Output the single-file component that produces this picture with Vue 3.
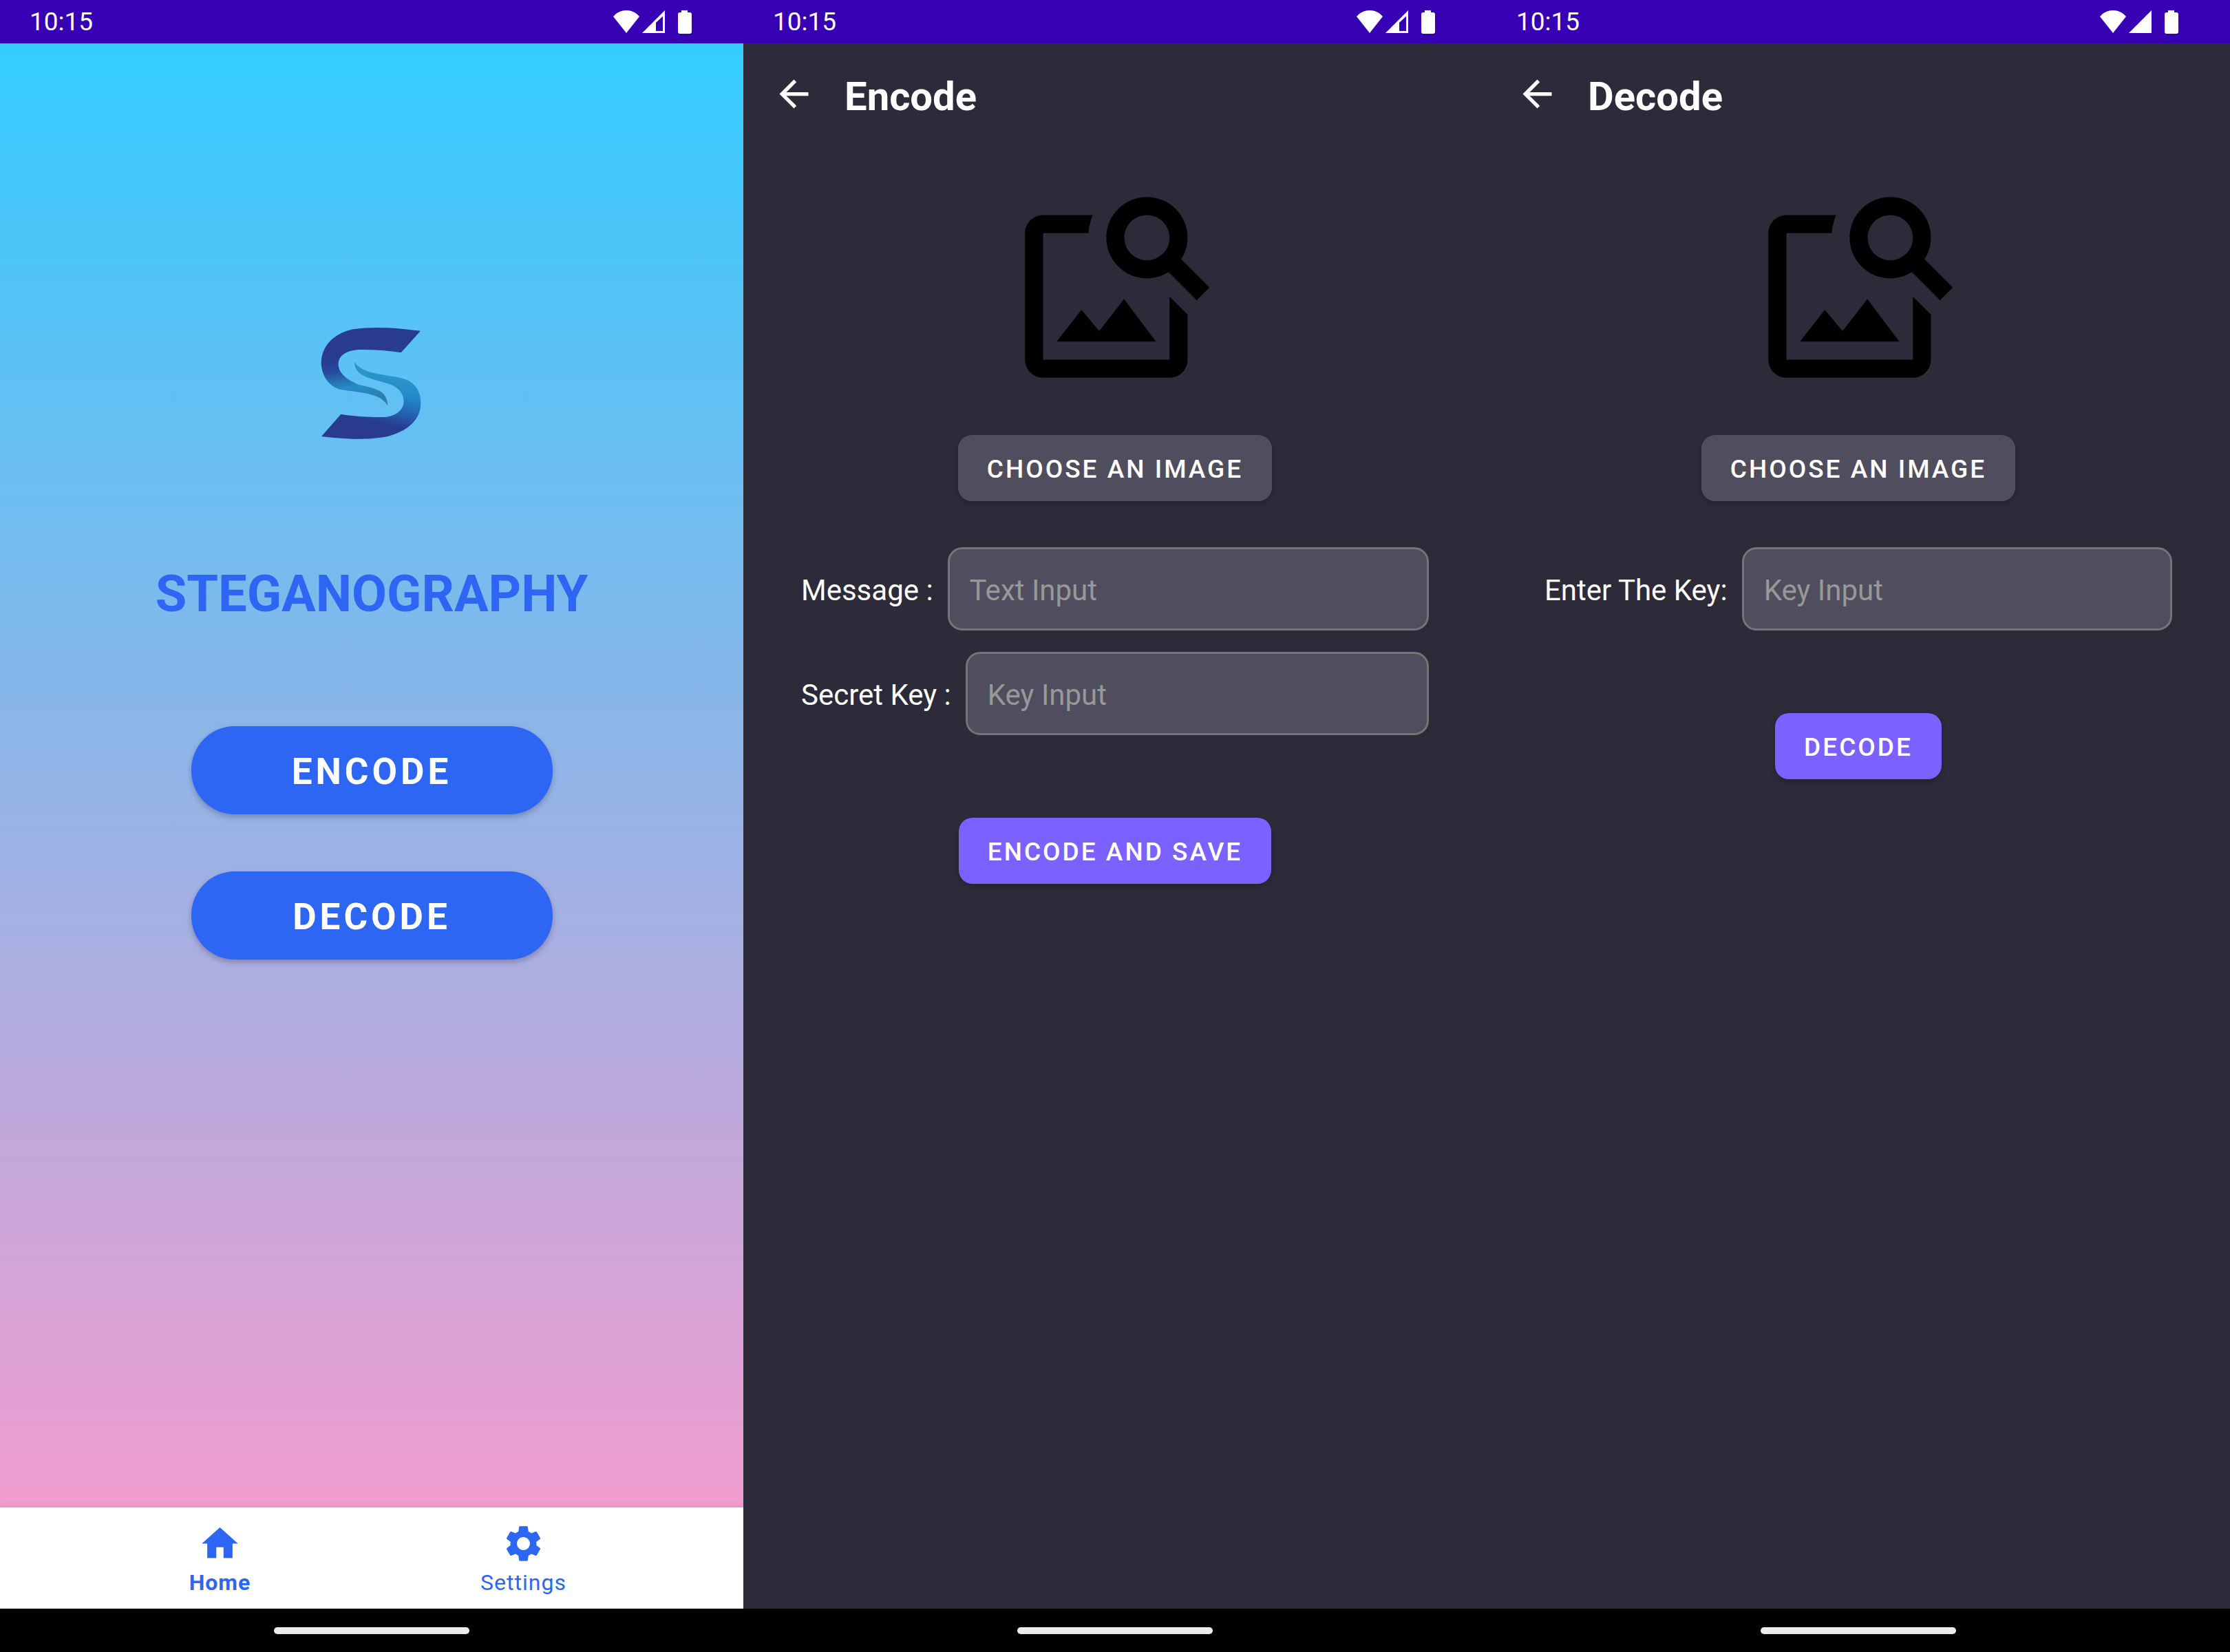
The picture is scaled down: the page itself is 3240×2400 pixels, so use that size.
<script setup>
import { ref } from 'vue'

const message = ref('')
const secretKey = ref('')
const decodeKey = ref('')

const screens = [
  { id: 'home', fullSignal: false },
  { id: 'encode', title: 'Encode', fullSignal: false },
  { id: 'decode', title: 'Decode', fullSignal: true },
]
</script>

<template>
  <div class="screens">
    <section v-for="screen in screens" :key="screen.id" class="screen" :class="screen.id">
      <div class="status-bar">
        <span class="clock">10:15</span>
        <svg class="status-icons" viewBox="0 0 116 36" aria-hidden="true">
          <path d="M20 34 1 10C6 4 13 1 20 1s14 3 19 9z" />
          <path v-if="screen.fullSignal" d="M76 1v33H43z" />
          <path v-else fill-rule="evenodd" d="M76 1v33H43zM73 9.500 63 19v12h10z" />
          <path d="M100 1h9v3h3q3 0 3 3v25q0 3-3 3h-14q-3 0-3-3V7q0-3 3-3h2z" />
        </svg>
      </div>

      <template v-if="screen.id === 'home'">
        <main class="home-body">
          <svg class="logo" viewBox="0 0 720 720" aria-hidden="true">
            <defs>
              <linearGradient id="logo-upper" gradientUnits="userSpaceOnUse" x1="290" y1="200" x2="330" y2="420">
                <stop offset="0.1" stop-color="#283b8f" />
                <stop offset="0.35" stop-color="#27479b" />
                <stop offset="0.72" stop-color="#258dc6" />
                <stop offset="1" stop-color="#2b7fae" />
              </linearGradient>
              <linearGradient id="logo-lower" gradientUnits="userSpaceOnUse" x1="470" y1="320" x2="420" y2="530">
                <stop offset="0" stop-color="#2b97c8" />
                <stop offset="0.35" stop-color="#2389c8" />
                <stop offset="0.7" stop-color="#2560ae" />
                <stop offset="1" stop-color="#283b8f" />
              </linearGradient>
            </defs>
            <path fill="url(#logo-upper)" d="M573 122 488 217C430 209 370 202 305 204C245 207 212 232 215 272C218 305 250 336 306 357C350 368 392 375 413 398C425 412 430 430 429 448C415 424 395 411 365 402C320 388 270 386 220 377C172 362 140 315 140 258C142 185 200 130 280 115C370 101 470 109 573 122Z" />
            <path fill="url(#logo-lower)" d="M285 257C300 283 335 298 375 307C420 318 470 320 510 334C552 352 576 390 574 440C572 520 500 568 410 586C325 599 235 593 141 582L226 485C280 494 330 499 420 498C465 492 498 470 500 430C500 390 470 362 425 350C385 338 345 330 315 312C295 300 284 280 285 257Z" />
          </svg>
          <h1 class="app-name">STEGANOGRAPHY</h1>
          <div class="home-actions">
            <button type="button" class="pill">ENCODE</button>
            <button type="button" class="pill">DECODE</button>
          </div>
        </main>
        <nav class="bottom-nav">
          <a href="#home" class="nav-item active">
            <svg viewBox="0 0 24 24" aria-hidden="true"><path d="M10 20v-6h4v6h5v-8h3L12 3 2 12h3v8z" /></svg>
            <span>Home</span>
          </a>
          <a href="#settings" class="nav-item">
            <svg viewBox="0 0 24 24" aria-hidden="true"><path d="M19.140 12.940c.04-.3.06-.61.06-.94 0-.32-.02-.64-.07-.94l2.030-1.580c.18-.14.23-.41.12-.61l-1.920-3.320c-.12-.22-.37-.29-.59-.22l-2.390.96c-.5-.38-1.030-.7-1.620-.94l-.36-2.540c-.04-.24-.24-.41-.48-.41h-3.840c-.24 0-.43.17-.47.41l-.36 2.540c-.59.24-1.130.57-1.620.94l-2.390-.96c-.22-.08-.47 0-.59.22L2.740 8.870c-.12.21-.08.47.12.61l2.030 1.580c-.05.3-.09.63-.09.94s.02.64.07.94l-2.030 1.580c-.18.14-.23.41-.12.61l1.920 3.320c.12.22.37.29.59.22l2.390-.96c.5.38 1.030.7 1.620.94l.36 2.540c.05.24.24.41.48.41h3.840c.24 0 .44-.17.47-.41l.36-2.540c.59-.24 1.130-.56 1.620-.94l2.390.96c.22.08.47 0 .59-.22l1.920-3.320c.12-.22.07-.47-.12-.61l-2.010-1.580zM12 15.600c-1.980 0-3.600-1.620-3.600-3.600s1.620-3.600 3.600-3.600 3.600 1.620 3.600 3.600-1.620 3.600-3.600 3.600z" /></svg>
            <span>Settings</span>
          </a>
        </nav>
      </template>

      <template v-else>
        <header class="toolbar">
          <button type="button" class="back" aria-label="Back">
            <svg viewBox="0 0 24 24" aria-hidden="true"><path d="M20 11H7.830l5.590-5.590L12 4l-8 8 8 8 1.410-1.410L7.830 13H20z" /></svg>
          </button>
          <h2 class="toolbar-title">{{ screen.title }}</h2>
        </header>
        <main class="form-body">
          <svg class="image-search" viewBox="0 0 24 24" aria-hidden="true">
            <path d="M18 13v7H4V6h5.020c.05-.71.22-1.380.48-2H4c-1.100 0-2 .9-2 2v14c0 1.100.9 2 2 2h14c1.100 0 2-.9 2-2v-5l-2-2zm-1.500 5h-11l2.750-3.530 1.960 2.360 2.750-3.540zm2.800-9.110c.44-.7.7-1.510.7-2.390C20 4.010 17.990 2 15.500 2S11 4.010 11 6.500s2.010 4.500 4.490 4.500c.88 0 1.700-.26 2.390-.7L21 13.420 22.420 12 19.300 8.890zM15.500 9C14.120 9 13 7.880 13 6.500S14.120 4 15.500 4 18 5.120 18 6.500 16.880 9 15.500 9z" />
          </svg>
          <button type="button" class="btn">CHOOSE AN IMAGE</button>
          <div v-if="screen.id === 'encode'" class="fields">
            <div class="field">
              <label for="message">Message :</label>
              <input id="message" v-model="message" type="text" placeholder="Text Input" />
            </div>
            <div class="field">
              <label for="secret-key">Secret Key :</label>
              <input id="secret-key" v-model="secretKey" type="text" placeholder="Key Input" />
            </div>
          </div>
          <div v-else class="fields">
            <div class="field">
              <label for="decode-key">Enter The Key:</label>
              <input id="decode-key" v-model="decodeKey" type="text" placeholder="Key Input" />
            </div>
          </div>
          <button type="button" class="btn primary">{{ screen.id === 'encode' ? 'ENCODE AND SAVE' : 'DECODE' }}</button>
        </main>
      </template>

      <div class="gesture-bar"><div class="handle"></div></div>
    </section>
  </div>
</template>

<style>
body {
  background: #2d2b3a;
}
</style>

<style scoped>
.screens {
  display: grid;
  grid-template-columns: repeat(3, 1fr);
  min-height: 100vh;
  font-family: Roboto, sans-serif;
}

.screen {
  display: flex;
  flex-direction: column;
  background: #2d2b3a;
  color: #fff;
}

button {
  border: 0;
  font-family: inherit;
  color: #fff;
  cursor: pointer;
}

svg {
  display: block;
  fill: currentColor;
}

.status-bar {
  display: flex;
  align-items: center;
  justify-content: space-between;
  height: 63px;
  padding: 0 74px 0 43px;
  background: #3700b3;
}

.clock {
  font-size: 37px;
  line-height: 44px;
}

.status-icons {
  width: 116px;
  height: 36px;
}

.home {
  background: linear-gradient(#33ccff 63px, #ff99cc calc(100% - 63px));
}

.home-body {
  flex: 1;
  display: flex;
  flex-direction: column;
  align-items: center;
  padding-top: 377px;
}

.logo {
  width: 240px;
  height: 240px;
}

.app-name {
  margin: 139px 0 0;
  font-size: 74px;
  line-height: 88px;
  font-weight: 700;
  color: #2c66f3;
}

.home-actions {
  display: flex;
  flex-direction: column;
  gap: 83px;
  margin-top: 148px;
}

.pill {
  width: 525px;
  height: 128px;
  padding-top: 4px;
  border-radius: 63px;
  background: #2c66f3;
  font-size: 53px;
  font-weight: 700;
  letter-spacing: 5px;
  box-shadow: 0 4px 8px rgba(0, 0, 0, 0.24);
}

.bottom-nav {
  display: flex;
  justify-content: center;
  height: 147px;
  background: #fff;
  box-shadow: 0 0 12px rgba(0, 0, 0, 0.12);
}

.nav-item {
  display: flex;
  flex-direction: column;
  align-items: center;
  width: 441px;
  padding-top: 21px;
  box-sizing: border-box;
  color: #2c66f3;
  font-size: 32px;
  line-height: 38px;
  letter-spacing: 1px;
  text-decoration: none;
}

.nav-item svg {
  width: 63px;
  height: 63px;
  margin-bottom: 6px;
}

.nav-item.active {
  font-weight: 700;
}

.toolbar {
  display: flex;
  align-items: center;
  gap: 42px;
  height: 147px;
  padding: 0 42px;
}

.back {
  padding: 0;
  background: none;
}

.back svg {
  width: 63px;
  height: 63px;
}

.toolbar-title {
  margin: 0;
  padding-top: 6px;
  font-size: 58px;
  line-height: 68px;
  font-weight: 700;
}

.form-body {
  flex: 1;
  display: flex;
  flex-direction: column;
  align-items: center;
  padding: 50px 84px 0;
}

.image-search {
  width: 315px;
  height: 315px;
  margin-bottom: 57px;
  color: #000;
}

.btn {
  height: 96px;
  padding: 2px 42px 0;
  border-radius: 20px;
  background: #504e5e;
  font-size: 37px;
  font-weight: 500;
  letter-spacing: 3px;
  box-shadow: 0 4px 8px rgba(0, 0, 0, 0.2);
}

.btn.primary {
  background: #7b61ff;
}

.fields {
  display: flex;
  flex-direction: column;
  align-self: stretch;
  gap: 31px;
  margin: 67px 0 120px;
}

.field {
  display: flex;
  align-items: center;
  gap: 21px;
  font-size: 42px;
  line-height: 50px;
}

.field label {
  padding-top: 4px;
}

.field input {
  flex: 1;
  min-width: 0;
  height: 121px;
  box-sizing: border-box;
  padding: 4px 29px 0;
  border: 3px solid #757575;
  border-radius: 21px;
  background: #504e5e;
  color: #fff;
  font: inherit;
}

.field input::placeholder {
  color: #989898;
  opacity: 1;
}

.gesture-bar {
  display: flex;
  align-items: center;
  justify-content: center;
  height: 63px;
  background: #000;
}

.handle {
  width: 284px;
  height: 10px;
  border-radius: 5px;
  background: #ebebeb;
}
</style>
